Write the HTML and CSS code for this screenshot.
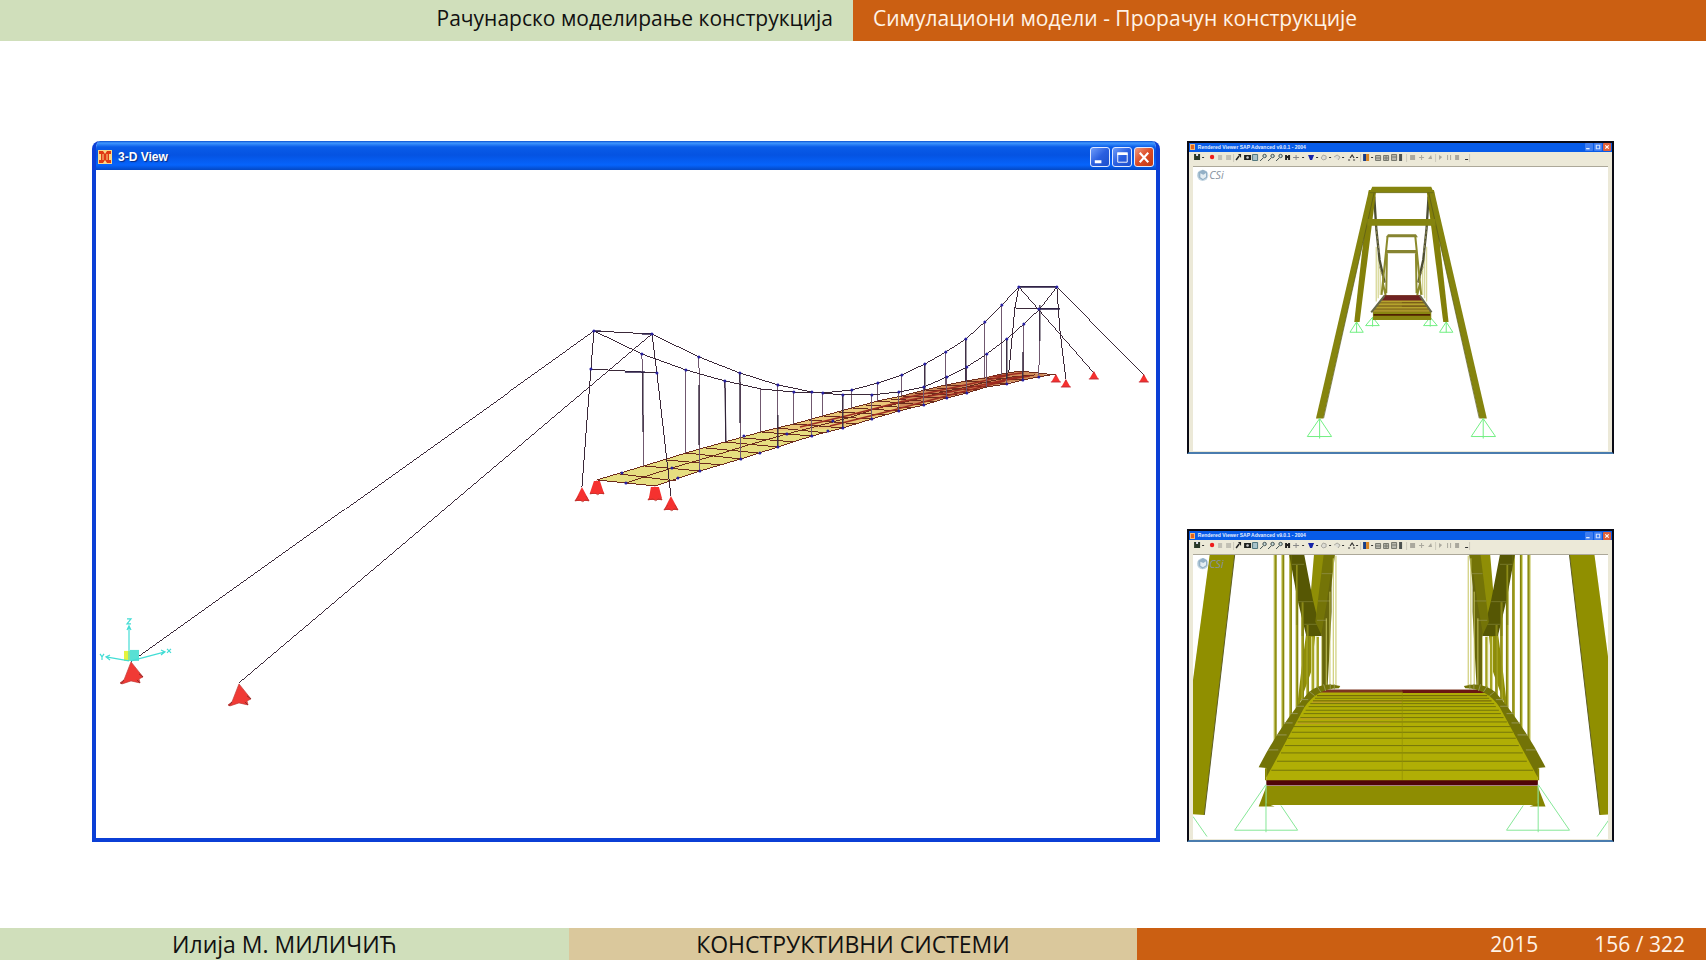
FILE: index.html
```html
<!DOCTYPE html>
<html lang="sr">
<head>
<meta charset="utf-8">
<title>Конструктивни системи</title>
<link rel="stylesheet" href="styles.css">
</head>
<body>
<div class="slide">
  <header class="headline">
    <div class="section">Рачунарско моделирање конструкција</div>
    <div class="subsection">Симулациони модели - Прорачун конструкције</div>
  </header>

  <main class="figures">
    <section class="window">
      <div class="window-bar">
        <svg class="window-icon" viewBox="0 0 14 14" aria-hidden="true">
          <rect width="14" height="14" fill="#f9d98a"/>
          <path d="M1 1h4l2 3 2-3h4v3h-2v6h2v3H9l-2-3-2 3H1v-3h2V4H1z" fill="#e03a12"/>
          <path d="M5 4v6M9 4v6" stroke="#f9d98a"/>
        </svg>
        <span class="window-title">3-D View</span>
        <button class="win-btn" aria-label="Minimize"><svg viewBox="0 0 19 20"><path d="M4 14.500h7" stroke="#fff" stroke-width="3"/></svg></button>
        <button class="win-btn" aria-label="Maximize"><svg viewBox="0 0 19 20"><path d="M5 6h10v9H5z" fill="none" stroke="#fff"/><path d="M4.500 6h11" stroke="#fff" stroke-width="3"/></svg></button>
        <button class="win-btn close" aria-label="Close"><svg viewBox="0 0 19 20"><path d="M5 5l9 10M14 5l-9 10" stroke="#fff" stroke-width="2.200"/></svg></button>
      </div>
      <svg class="drawing" viewBox="96 170 1060 669" role="img" aria-label="3-D model">
        <defs>
          <g id="sup"><path d="M0 0L-7 14H7.500z" fill="#f5312f"/><path d="M-3 9l-4 5 5-1 3 2 2-2 4 1-3-5" fill="none" stroke="#b3342f" stroke-width=".8"/></g>
          <g id="sup-lg"><path d="M0 0L-7 18-11 21-9 22 0 19 9 21 8 17 12 15z" fill="#f03a35" stroke="#c03a35" stroke-width=".7"/><path d="M-7 18l-3 4M6 18l3 3M8 12l4 3" stroke="#8d2c2c" fill="none"/></g>
          <g id="sup-sm"><path d="M0 -1L-4.500 7H4.500z" fill="#f5312f"/><path d="M-5 7H5M0 0v2" stroke="#c42c36"/></g>
        </defs>
        <polygon points="597,480 644,466 686,453 725,442 761,432 794,424 823,416 852,408 852,425 843,428 812,436 778,447 741,459 700,471 655,486 626,483" fill="#e6de80"/>
        <polygon points="761,432 794,424 823,416 852,408 878,401 902,396 925,390 946,385 946,398 924,405 899,411 872,419 843,428" fill="#eac878"/>
        <polygon points="902,396 925,390 966,381 1002,374 1020,371 1050,375 1023,380 987,387 947,398 899,408" fill="#cf8a58"/>
        <g class="grid" fill="none" stroke="#6d2b1c">
          <path d="M597 480L644 466 686 453 725 442 761 432 794 424 823 416 852 408 878 401 902 396 925 390 946 385 966 381 985 378 1002 374 1020 371 1056 375"/>
          <path d="M626 483L672 468 713 456 752 444 787 434 818 426 848 418 875 409 901 403 925 397 947 391 967 387 986 382 1012 377 1035 375"/>
          <path d="M597 480L626 483 655 486 700 471 741 459 778 447 812 436 843 428 872 419 899 411 924 405 947 398 967 393 987 387 1007 384 1023 380 1050 375"/>
          <path d="M620 474l56 7M644 466l56 5M666 460l56 5M686 453l55 6M706 448l52 5M725 442l53 5M743 438l52 4M761 432l51 4M778 428l49 5M794 424l49 4M809 420l49 4M823 416l49 3M838 412l48 3M852 408l47 3M865 405l47 3M878 401l46 4M890 399l45 3M902 396l45 2M914 393l43 2M925 390l42 3M936 388l41 2M946 385l41 2M966 381l41 3M985 378l38 2"/>
        </g>
        <path d="M800 427l50-12 50-13 50-10 50-11 30-5M830 426l60-15 60-16 55-14M900 399l70-15 40-9M990 377l32-4M1002 380l22-4" fill="none" stroke="#9d2b20" stroke-width="1.400"/>
        <g class="wires" fill="none" stroke="#70586f">
          <path d="M642 354l2 112M686 370v83M725 381l1 61M761 389v43M794 392v32M823 393v23M852 390v18M878 383v18M902 375v21M925 364v26M946 352v33M966 339v42M985 322v56M1002 305v70"/>
          <path d="M699 357l1 114M740 373l1 86M778 385v62M812 392v44M843 395v33M872 395v24M899 392v19M924 387v18M947 377v21M967 367v26M987 354v33M1007 339v45M1024 324l-1 56M1040 309l-1 66"/>
        </g>
        <path d="M643 372v60M725 381l1 61M699 385v60M740 373v50M778 415v32M843 395v33M925 364v26M966 339v42M1007 339v40M1023 352v28M1040 305v36" stroke="#302338" fill="none" stroke-width="1.200"/>
        <g class="wires" fill="none" stroke="#3a2838">
          <path d="M131 662L594 331 642 354 686 370 725 381 761 389 794 392 823 393 852 390 878 383 902 375 925 364 946 352 966 339 985 322 1002 305 1019 287 1094 373"/>
          <path d="M239 683L652 334 699 357 740 373 778 385 812 392 843 395 872 395 899 392 924 387 947 377 967 367 987 354 1007 339 1024 324 1040 309 1057 287 1144 375"/>
          <path d="M594 331l58 3M594 331l-3 38-9 118M652 334l5 39 14 123M591 369l66 4"/>
          <path d="M1019 287h38M1019 287l-4 21-6 64M1057 287l3 43 6 49M1015 308l45 1"/>
        </g>
        <path d="M594 331h7M642 334h10M625 372h20M1040 309h20M1020 287h36" stroke="#2c2048" stroke-width="1.400"/>
        <path d="M594 331h0M652 334h0M642 354h0M699 357h0M686 370h0M740 373h0M725 381h0M778 385h0M812 392h0M794 392h0M823 393h0M852 390h0M843 395h0M872 395h0M878 383h0M899 392h0M902 375h0M924 387h0M925 364h0M947 377h0M946 352h0M966 339h0M967 367h0M985 322h0M987 354h0M1002 305h0M1007 339h0M1024 324h0M1019 287h0M1057 287h0M1039 309h0M657 373h0M591 369h0M626 483h0M672 468h0M622 473h0M678 478h0M700 471h0M741 459h0M760 453h0M778 447h0M812 436h0M828 431h0M843 428h0M872 419h0M899 411h0M924 405h0M947 398h0M967 393h0M1007 384h0M1023 380h0M1039 377h0M744 436h0M833 421h0M787 434h0" stroke="#2720a0" stroke-width="3" stroke-linecap="round"/>
        <use href="#sup" x="582" y="487"/><use href="#sup" x="597" y="480"/><use href="#sup" x="655" y="486"/><use href="#sup" x="671" y="496"/>
        <path d="M594 481h6l4 12h-14zM651 487h8l3 11h-13z" fill="#f5312f"/>
        <use href="#sup-sm" x="1056" y="375"/><use href="#sup-sm" x="1066" y="380"/><use href="#sup-sm" x="1094" y="372"/><use href="#sup-sm" x="1144" y="375"/>
        <path d="M124 651h6v10h-6z" fill="#e5f33c"/><path d="M130 650h9v11h-9z" fill="#58e0d4"/>
        <path d="M129 661v-34M129 661l-23-4M131 661l34-9M127 630l2-4 2 4M110 655l-4 2 4 3M161 650l4 2-4 3M127 619h4l-4 5h4M100 654l2 3 2-3M102 657v3M167 649l4 4M171 649l-4 4" fill="none" stroke="#43ddd5" stroke-width="1.200"/>
        <use href="#sup-lg" x="131" y="662"/><use href="#sup-lg" x="239" y="684"/>
      </svg>
    </section>

    <div class="renders">
      <section class="viewer">
        <div class="viewer-bar">
          <span class="viewer-icon"></span>
          <span class="viewer-title">Rendered Viewer SAP Advanced v9.0.1 - 2004</span>
          <button class="mini-btn" aria-label="Minimize"><svg viewBox="0 0 7 7"><path d="M1 5h3" stroke="#fff"/></svg></button>
          <button class="mini-btn" aria-label="Maximize"><svg viewBox="0 0 7 7"><path d="M2 2h3v3H2z" fill="none" stroke="#cfe0ff"/></svg></button>
          <button class="mini-btn close" aria-label="Close"><svg viewBox="0 0 7 7"><path d="M2 2l3 3M5 2L2 5" stroke="#fff"/></svg></button>
        </div>
        <svg class="toolbar" viewBox="1189 152 423 13" aria-hidden="true">
          <g id="tools">
            <path d="M1194 154h6v6h-6z" fill="#283828"/><path d="M1196 154h2v2h-2z" fill="#dde"/>
            <path d="M1202 157.500h2M1302 157.500h2M1316 157.500h2M1329 157.500h2M1342 157.500h2M1356 157.500h2M1371 157.500h2M1465 159.500h3" stroke="#333"/>
            <circle cx="1212" cy="157" r="2.200" fill="#ee1c1c"/>
            <path d="M1218 155h4v5h-4zM1226 155h5v5h-5z" fill="#c2c0b4"/>
            <path d="M1236 160l3-4" stroke="#222" stroke-width="1.500"/><path d="M1238 154h3v4z" fill="#222"/>
            <path d="M1244 155h7v5h-7z" fill="#1e211e"/><circle cx="1247.500" cy="157.500" r="1.300" fill="#ccc"/>
            <path d="M1252.500 154.500h5v6h-5z" fill="#a9c4cb" stroke="#52777e"/>
            <g fill="#c9dcda" stroke="#414f50"><circle cx="1264.500" cy="156" r="1.700"/><path d="M1263 158l-3 3"/><circle cx="1272.500" cy="156" r="1.700"/><path d="M1271 158l-3 3"/><circle cx="1280.500" cy="156" r="1.700"/><path d="M1279 158l-3 3"/></g>
            <path d="M1285 155h2v5h-2zM1288 155h2v5h-2zM1286 156h3v2h-3z" fill="#222"/>
            <path d="M1293 157.500h6M1296 155v5" stroke="#888"/>
            <path d="M1308 155h6l-2 5h-2z" fill="#1623a8"/>
            <path d="M1321 158l2-3 3 1v3l-3 1zM1334 157l3-2 3 2-2 3" fill="#deddd5" stroke="#aaa9a0"/>
            <path d="M1348 160h2M1353 160h2M1350 158l2-3 2 3" stroke="#333" fill="none" stroke-width="1.200"/>
            <path d="M1363 154h3v7h-3z" fill="#193e87"/><path d="M1366 154h3v7h-3z" fill="#d98523"/>
            <path d="M1375.500 155.500h5v5h-5zM1383.500 155.500h5v5h-5zM1391.500 154.500h5v6h-5zM1375 158h6M1384 158h5M1392 157h5M1386 155v6" fill="#b9b9ae" stroke="#77796f"/>
            <path d="M1399 154h3v7h-3z" fill="#4c514f"/>
            <path d="M1410 155h5v5h-5zM1419 157h5v1h-5zM1421 155h1v5h-1zM1428 159l3-4 1 4zM1439 155l3 2-3 3zM1447 155h1v5h-1zM1450 155h1v5h-1zM1455 155h4v5h-4z" fill="#aaa89d"/>
            <path d="M1233.500 154v8M1360.500 154v8M1406.500 154v8M1435.500 154v8M1469.500 154v8" stroke="#ccc9bb"/>
          </g>
        </svg>
        <svg class="scene" viewBox="-260 -9 1246 853" role="img" aria-label="Rendered front view">
          <g id="csi">
            <circle cx="-231" cy="16" r="17" fill="#c4d6e2"/><path d="M-244 7l14-8 12 7v17l-13 8-12-8z" fill="#93b0c6"/><path d="M-238 10l9 4 8-5v12l-9 6-8-5z" fill="#e4edf2"/>
            <text class="logo-text" x="-211" y="28">CSi</text>
          </g>
          <g id="half-tower">
            <path d="M302 275V375M296 250V385M290 230V395" stroke="#d8d89a" stroke-width="4"/>
            <path d="M284 80l6 95 10 95 15 68" fill="none" stroke="#4d4e32" stroke-width="7"/>
            <path d="M300 290l15 50M289 170l10 80" stroke="#8f8a58" stroke-width="3" stroke-dasharray="9 5"/>
            <path d="M324 198L306 375M322 250l-2 120M310 340l8 36" fill="none" stroke="#8b8a2b" stroke-width="6"/>
            <path d="M268 60h22L240 456H224z" fill="#838009"/><path d="M268 60h18L131 746H109z" fill="#85840e"/><path d="M284 66L132 745" stroke="#55561a" stroke-width="2"/>
            <g fill="none" stroke="#71ef83" stroke-width="3"><path d="M120 746L83 800H156zM120 746V806M231 456l-20 31h40zM231 456v32M279 442l-21 25h41zM279 442v28"/></g>
          </g>
          <use href="#half-tower" transform="translate(731) scale(-1 1)"/>
          <path d="M278 50h177l8 18H270zM263 147h205v20H263z" fill="#85840e"/>
          <path d="M270 68h192" stroke="#626316" stroke-width="2"/>
          <path d="M320 202l5-9h84l6 9zM320 240h90v10h-90z" fill="#868431"/>
          <path d="M315 376h106l35 50H276z" fill="#8f7721"/><path d="M315 376h106l10 17H303z" fill="#6f2222"/>
          <path d="M303 394h126M295 403h142M288 413h156M281 423h168" stroke="#b5a32d" stroke-width="4"/><path d="M367 398h67M367 409h76" stroke="#6d4d14" stroke-width="2"/>
          <path d="M280 426h175v24H280z" fill="#898611"/><path d="M282 435h170" stroke="#502000" stroke-width="5"/><path d="M315 377l-40 50M421 377l35 50" stroke="#66684a" stroke-width="6"/>
        </svg>
      </section>

      <section class="viewer">
        <div class="viewer-bar">
          <span class="viewer-icon"></span>
          <span class="viewer-title">Rendered Viewer SAP Advanced v9.0.1 - 2004</span>
          <button class="mini-btn" aria-label="Minimize"><svg viewBox="0 0 7 7"><path d="M1 5h3" stroke="#fff"/></svg></button>
          <button class="mini-btn" aria-label="Maximize"><svg viewBox="0 0 7 7"><path d="M2 2h3v3H2z" fill="none" stroke="#cfe0ff"/></svg></button>
          <button class="mini-btn close" aria-label="Close"><svg viewBox="0 0 7 7"><path d="M2 2l3 3M5 2L2 5" stroke="#fff"/></svg></button>
        </div>
        <svg class="toolbar" viewBox="1189 152 423 13" aria-hidden="true"><use href="#tools"/></svg>
        <svg class="scene" viewBox="38 90 1246 853" role="img" aria-label="Rendered deck view">
          <path d="M410 497H921C1000 545 1040 640 1073 728V768H258V728C290 640 345 545 410 497z" fill="#b0ae05"/>
          <path d="M420 494h490l12 9H410z" fill="#7c3520"/><path d="M666 495h245l8 9H666z" fill="#6a1712"/>
          <path d="M410 512h511M398 528h536" stroke="#776c08" stroke-width="4"/>
          <path d="M404 520h523M390 536h552M385 545h562M376 556h580M370 566h592M360 578h610M352 591h628M340 605h650M334 622h664M323 640h684M314 662h702M302 684h726M290 709h750M273 736h786" stroke="#74750a" stroke-width="3"/>
          <path d="M395 532h270M362 582h310M350 595h280" stroke="#bd972b" stroke-width="3"/>
          <path d="M666 500V765" stroke="#8f8e06" stroke-width="2"/>
          <path d="M258 783h815v57H258z" fill="#8e8d02"/><path d="M258 766h815v16H258z" fill="#500408"/>
          <g id="half-bridge">
            <path d="M88 90h75L72 870 38 868V465z" fill="#908f00"/><path d="M163 90L72 870" stroke="#5c5c25" stroke-width="3"/>
            <path d="M401 90h40l-24 130-24 220-45 125 14-120 26-200z" fill="#8f8e06"/>
            <path d="M285 90V672M308 90V632M331 90V590M350 120V565M367 232V545M382 300V525M398 335V510M412 335V500" stroke="#a3a21f" stroke-width="8"/>
            <path d="M327 90h45l26 135 27 108h-47l-26-108z" fill="#565704"/>
            <path d="M350 120V300M367 232V333M382 300V333" stroke="#8e8d1b" stroke-width="6"/>
            <path d="M334 118h38M352 230h46M372 298h45" stroke="#85863a" stroke-width="2"/>
            <path d="M430 90h34l-20 170-19 73-20-43z" fill="#747407"/><path d="M424 320l16-90 14-100v130l-12 225h-18z" fill="#67660b"/>
            <path d="M424 146h33M413 228h36M410 286h30" stroke="#969652" stroke-width="2"/>
            <path d="M438 280V485M449 200V487M459 100V487M467 92V487" stroke="#c5c45d" stroke-width="3"/>
            <path d="M287 90V672M310 90V632M333 90V590M352 120V565M369 232V545M384 300V525" stroke="#706f08" stroke-width="2"/>
            <path d="M281 90V672M304 90V632M394 335V510M408 335V500M424 335V490" stroke="#d5d68e" stroke-width="3"/>
            <path d="M235 727Q300 600 385 502 425 468 480 483L476 490Q410 490 372 548L258 758V729z" fill="#737307"/>
            <path d="M264 675h30M289 630h30M310 594h27M330 566h22M347 544h24M362 524h22M388 500l15 12M410 484l12 18M430 478l6 20M450 477v18M462 478v16" stroke="#969653" stroke-width="3"/>
            <path d="M235 845h48l-25-10v-50z" fill="#858400"/><path d="M256 730v36" stroke="#858400" stroke-width="4"/>
            <path d="M257 779L163 916H352L302 842M257 782V922M38 875l42 60" fill="none" stroke="#85e797" stroke-width="3"/>
          </g>
          <use href="#half-bridge" transform="translate(1331) scale(-1 1)"/>
          <use href="#csi" x="298" y="100"/>
        </svg>
      </section>
    </div>
  </main>

  <footer class="footline">
    <div class="author">Илија М. МИЛИЧИЋ</div>
    <div class="title">КОНСТРУКТИВНИ СИСТЕМИ</div>
    <div class="date"><span>2015</span><span>156 / 322</span></div>
  </footer>
</div>
</body>
</html>
```
FILE: styles.css
```css
* { box-sizing: border-box; }

body {
  margin: 0;
  background: #fff;
  color: #111;
  font-family: "Open Sans", "Noto Sans", sans-serif;
  font-size: 21px;
}

.slide {
  display: grid;
  grid-template-rows: auto 1fr auto;
  min-height: 100vh;
}

.headline {
  display: grid;
  grid-template-columns: 1fr 1fr;
  line-height: 36px;
  white-space: nowrap;
}

.section {
  padding: 0 20px 5px;
  background: #d0dfbb;
  text-align: right;
}

.subsection {
  padding: 0 20px 5px;
  background: #cb5f12;
  color: #fff3e6;
}

.figures {
  display: grid;
  grid-template-columns: 5fr 2fr;
  gap: 27px;
  align-content: center;
  padding: 14px 92px 0;
}

.window {
  border: solid #0b3fd6;
  border-width: 0 4px 4px;
  border-radius: 8px 8px 0 0;
  background: #fff;
  overflow: hidden;
}

.window-bar {
  display: flex;
  align-items: center;
  gap: 2px;
  height: 29px;
  padding: 3px 2px 0;
  background: linear-gradient(#0a4fd0 0, #3f97ff 2px, #0a5ce8 6px, #0553e2 14px, #0664fc 24px, #0448c4 29px);
  color: #fff;
}

.window-icon {
  width: 14px;
  height: 14px;
}

.window-title {
  flex: 1;
  padding-left: 4px;
  font: bold 12px "Liberation Sans", Arial, sans-serif;
  text-shadow: 1px 1px 1px #0a2a80;
}

.win-btn {
  width: 20px;
  height: 20px;
  padding: 0;
  border: 1px solid #dfe9ff;
  border-radius: 3px;
  background: linear-gradient(135deg, #6f9dfa, #2a5fe0 50%, #1d50cc);
}

.win-btn.close {
  background: linear-gradient(135deg, #ef9a80, #dc4a24 50%, #c03a14);
}

.drawing, .scene, .toolbar, .win-btn svg, .mini-btn svg {
  display: block;
  width: 100%;
  height: auto;
}

.wires, .grid { shape-rendering: crispEdges; }

.renders {
  display: flex;
  flex-direction: column;
  justify-content: space-between;
}

.viewer {
  padding-bottom: 1px;
  border: 2px solid #0a0a14;
  border-bottom: 2px solid #4a7cae;
  background: #ece9d8;
}

.viewer-bar {
  display: flex;
  align-items: center;
  gap: 1px;
  height: 9px;
  padding: 0 1px;
  background: #075be8;
}

.viewer-icon {
  width: 5px;
  height: 6px;
  border: 1px solid #f4b878;
  background: #e2651d;
}

.viewer-title {
  flex: 1;
  padding-left: 2px;
  color: #e4eeff;
  font: bold 5px/9px "Liberation Sans", sans-serif;
}

.mini-btn {
  width: 8px;
  height: 8px;
  padding: 0;
  border: 0;
  border-radius: 1px;
  background: #3f7df0;
}

.mini-btn.close { background: #e0603a; }

.scene {
  width: calc(100% - 8px);
  margin: 1px 4px 0;
  border-top: 1px solid #aca899;
  background: #fff;
}

.logo-text {
  fill: #8793a0;
  font: italic 32px "Open Sans", sans-serif;
}

.footline {
  display: grid;
  grid-template-columns: 1fr 1fr 1fr;
  line-height: 32px;
  text-align: center;
  white-space: nowrap;
}

.author, .title { font-size: 23px; }

.author { background: #d0dfbb; }

.title { background: #dac89c; }

.date {
  display: flex;
  justify-content: flex-end;
  gap: 56px;
  padding-right: 21px;
  background: #cb5f12;
  color: #fff3e6;
}
```
